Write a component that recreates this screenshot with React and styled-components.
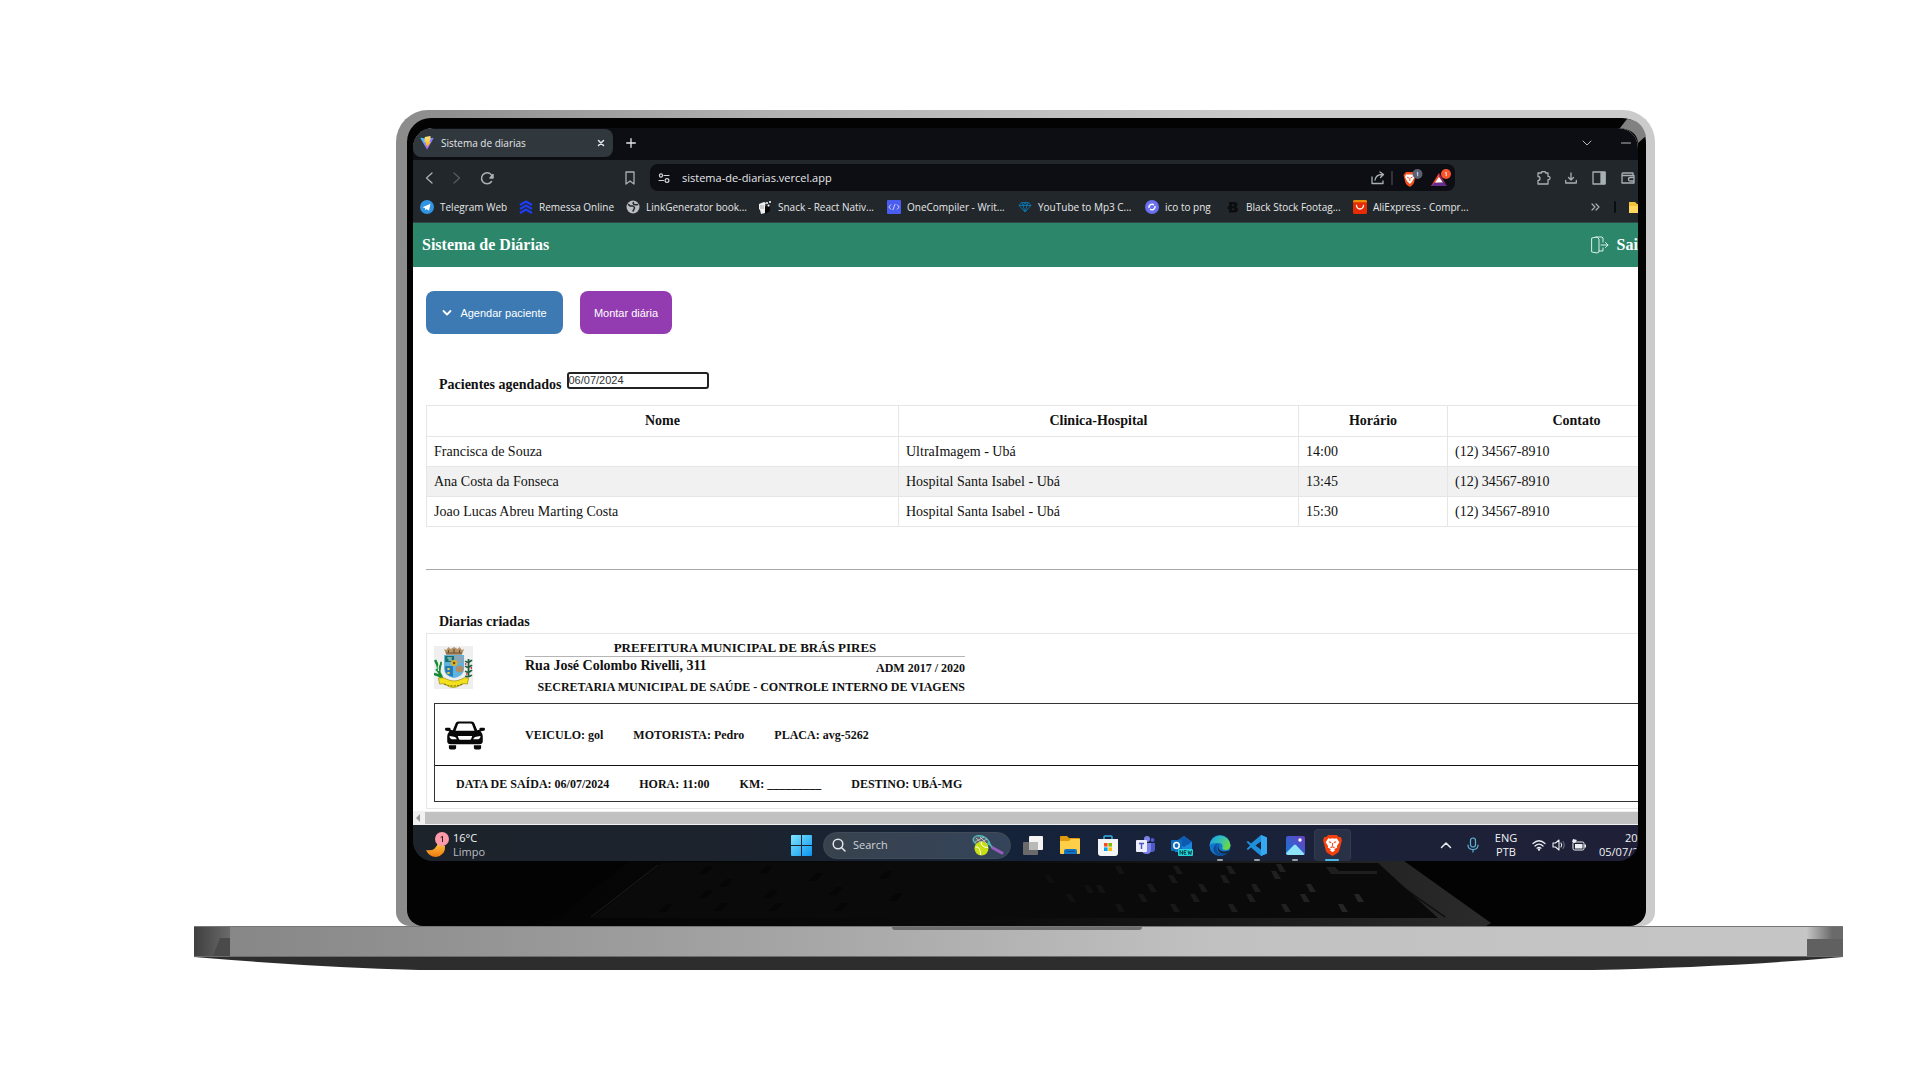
import React from "react";
import styled, { createGlobalStyle } from "styled-components";

const serif = '"Liberation Serif", "Times New Roman", serif';
const sans = '"Liberation Sans", Arial, sans-serif';
const ui = '"Open Sans", "Noto Sans", sans-serif';

const GlobalStyle = createGlobalStyle`
  *, *::before, *::after { box-sizing: border-box; }
  body { margin: 0; background: #fff; font-family: ${ui}; }
  button, input { font: inherit; color: inherit; }
  svg { display: block; flex: none; }
`;

/* ---------- laptop shell ---------- */

const Stage = styled.main`
  min-height: 100vh;
  padding: 110px 77px 0 194px;
  overflow: hidden;
`;
const Lid = styled.div`
  margin: 0 188px 0 202px;
  padding: 8px 9px 0 11px;
  background: linear-gradient(90deg, #8b8b8b, #b2b2b2 30%, #cbcbcb 70%, #cbcbcb);
  border-radius: 32px 32px 14px 14px;
`;
const Bezel = styled.div`
  position: relative;
  padding: 10px 8px 0 6px;
  background: #030303;
  border-radius: 24px 24px 16px 16px;
`;
const Gleam = styled.svg`
  position: absolute;
  top: 0;
  right: 0;
`;
const Screen = styled.div`
  overflow: hidden;
  border-radius: 20px;
  background: #0d0e13;
`;
const Chin = styled.svg`
  width: 100%;
  height: 65px;
`;
const Base = styled.div`
  display: flex;
  justify-content: space-between;
  height: 31px;
  border-top: 1px solid #777;
  border-bottom: 1px solid #6c6c6c;
  background: linear-gradient(90deg, #858585, #a4a4a4 35%, #c1c1c1 62%, #c6c6c6);
`;
const EndCap = styled.svg`
  width: 36px;
  height: 29px;
`;
const Notch = styled.div`
  width: 250px;
  height: 3px;
  margin-right: 4px;
  background: #6e6e6e;
  border-radius: 0 0 8px 8px;
`;
const Underside = styled.svg`
  width: 100%;
  height: 13px;
`;

/* ---------- browser ---------- */

const Window = styled.div`
  width: calc(100% + 80px);
  height: 697px;
  overflow: hidden;
  background: #fff;
`;
const TabStrip = styled.div`
  display: flex;
  align-items: center;
  height: 32px;
  padding: 0 73px 2px 0;
  background: #0d0e13;
  color: #e4e6e8;
`;
const Tab = styled.div`
  display: flex;
  align-items: center;
  gap: 7px;
  width: 200px;
  height: 28px;
  padding: 0 7px;
  background: #30383d;
  border-radius: 8px;
  font-size: 10px;
`;
const Grow = styled.span`
  flex: 1;
`;
const IconButton = styled.button`
  display: flex;
  align-items: center;
  justify-content: center;
  flex: none;
  width: ${(p) => p.$w || 28}px;
  height: ${(p) => p.$h || 26}px;
  padding: 0;
  border: 0;
  background: none;
`;
const Toolbar = styled.div`
  display: flex;
  align-items: center;
  height: 35px;
  padding: 0 76px 0 2px;
  background: #22272b;
`;
const ToolGap = styled.span`
  width: 118px;
`;
const Address = styled.div`
  display: flex;
  align-items: center;
  flex: 1;
  height: 27px;
  margin: 0 75px 0 12px;
  padding: 0 1px 0 8px;
  background: #0d0e13;
  border-radius: 8px;
`;
const AddressInput = styled.input`
  flex: 1;
  min-width: 0;
  margin-left: 12px;
  padding: 0;
  border: 0;
  outline: 0;
  background: none;
  color: #e6e8ea;
  font-size: 11px;
`;
const Bookmarks = styled.nav`
  display: flex;
  align-items: center;
  height: 28px;
  padding: 0 69px 3px 7px;
  background: #22272b;
  border-bottom: 1px solid #2f4a46;
`;
const Bookmark = styled.a`
  display: flex;
  align-items: center;
  gap: 6px;
  width: ${(p) => p.$w}px;
  flex: none;
  color: #e6e8ea;
  font-size: 10px;
  text-decoration: none;
  white-space: nowrap;
`;

/* ---------- page ---------- */

const Header = styled.header`
  display: flex;
  align-items: center;
  justify-content: space-between;
  height: 44px;
  padding: 0 73px 0 9px;
  background: #2b866a;
  color: #fff;
  font-family: ${serif};
`;
const Brand = styled.h1`
  margin: 0;
  font-size: 16px;
`;
const Exit = styled.a`
  display: flex;
  align-items: center;
  gap: 8px;
  color: #fff;
  font-size: 16px;
  font-weight: bold;
  text-decoration: none;
`;
const Content = styled.div`
  padding: 24px 12px 0 13px;
  font-family: ${serif};
  color: #111;
`;
const Actions = styled.div`
  display: flex;
  gap: 17px;
`;
const Action = styled.button`
  display: flex;
  align-items: center;
  justify-content: center;
  gap: 8px;
  width: ${(p) => p.$w}px;
  height: 43px;
  padding: 0;
  border: 0;
  border-radius: 8px;
  background: ${(p) => p.$color};
  color: #fff;
  font: 11px ${sans};
`;
const Filter = styled.div`
  display: flex;
  gap: 5px;
  height: 33px;
  margin-top: 38px;
  padding-left: 13px;
`;
const Label = styled.label`
  padding-top: 4px;
  font-size: 14px;
  line-height: 18px;
  font-weight: bold;
`;
const DateInput = styled.input`
  width: 142px;
  height: 17px;
  padding: 0 0 2px;
  border: 2px solid #222;
  border-radius: 3px;
  outline: 0;
  background: #fff;
  color: #333;
  font: 11px ${sans};
`;
const Table = styled.table`
  width: 100%;
  table-layout: fixed;
  border-collapse: collapse;
  font-size: 14px;
`;
const Col = styled.col`
  width: ${(p) => p.$w};
`;
const Row = styled.tr`
  height: ${(p) => (p.$head ? 31 : 30)}px;
  background: ${(p) => (p.$shade ? "#f1f1f1" : "#fff")};
`;
const Cell = styled.td`
  padding: 0 7px;
  border: 1px solid #e6e6e6;
`;
const Rule = styled.hr`
  margin: 42px 0 0;
  border: 0;
  border-top: 1px solid #a8a8a8;
`;
const SectionTitle = styled.h2`
  margin: 43px 0 0;
  padding-left: 13px;
  font-size: 14px;
  line-height: 18px;
`;
const Card = styled.article`
  margin-top: 2px;
  padding: 6px 7px;
  border: 1px solid #e6e6e6;
  font-size: 12px;
  font-weight: bold;
`;
const CardHead = styled.div`
  display: flex;
  gap: 52px;
  height: 63px;
  padding-top: 6px;
`;
const Issuer = styled.div`
  width: 440px;
  margin-top: -6px;
`;
const IssuerName = styled.div`
  border-bottom: 1px solid #b5b5b5;
  font-size: 13px;
  line-height: 16px;
  text-align: center;
`;
const StreetRow = styled.div`
  display: flex;
  justify-content: space-between;
  line-height: 22px;
`;
const Street = styled.span`
  font-size: 14px;
  line-height: 18px;
`;
const Office = styled.div`
  line-height: 16px;
  text-align: right;
  white-space: nowrap;
`;
const Trip = styled.div`
  border: 1px solid #333;
`;
const TripRow = styled.div`
  display: flex;
  align-items: center;
  gap: 30px;
  height: ${(p) => p.$h}px;
  padding: 2px 0 0 ${(p) => p.$pad}px;
  border-top: ${(p) => (p.$line ? "1px solid #111" : "0")};
`;
const CarBox = styled.span`
  width: 50px;
`;
const ScrollTrack = styled.div`
  display: flex;
  align-items: center;
  gap: 5px;
  height: 14px;
  margin-top: 2px;
  padding-left: 3px;
  background: #f1f1f1;
`;
const Thumb = styled.div`
  flex: 1;
  height: 12px;
  background: #c1c1c1;
`;

/* ---------- taskbar ---------- */

const Taskbar = styled.footer`
  display: flex;
  align-items: center;
  height: 36px;
  padding: 4px 0 0 13px;
  background: linear-gradient(90deg, #1d232b, #1c232d 25%, #15233a 50%, #1d2138 85%, #1f2038);
  color: #f2f3f5;
  font-size: 11px;
  line-height: 14px;
`;
const Weather = styled.div`
  display: flex;
  align-items: center;
  gap: 3px;
  width: 363px;
`;
const Muted = styled.div`
  color: #b9bdc3;
`;
const SearchBox = styled.label`
  display: flex;
  align-items: center;
  width: 188px;
  height: 27px;
  margin: 0 3px 0 10px;
  padding: 0 6px 0 8px;
  background: linear-gradient(90deg, #38424e, #34445a);
  border: 1px solid #424c59;
  border-radius: 14px;
`;
const SearchInput = styled.input`
  flex: 1;
  min-width: 0;
  margin-left: 7px;
  padding: 0;
  border: 0;
  outline: 0;
  background: none;
  font-size: 11px;
  &::placeholder { color: #cfd4da; opacity: 1; }
`;
const Apps = styled.div`
  display: grid;
  grid-template-columns: repeat(9, 1fr);
  width: 337px;
`;
const AppButton = styled.button`
  display: flex;
  flex-direction: column;
  align-items: center;
  justify-content: flex-end;
  gap: 3px;
  height: 32px;
  padding: 0;
  border: ${(p) => (p.$active ? "1px solid #323a50" : "0")};
  border-bottom: 0;
  border-radius: 4px;
  background: ${(p) => (p.$active ? "#283146" : "none")};
  &::after {
    content: "";
    width: ${(p) => (p.$active ? 14 : 6)}px;
    height: 2px;
    border-radius: 1px;
    background: ${(p) => (p.$active ? "#4cb8e8" : p.$open ? "#9a9fa8" : "transparent")};
  }
`;
const Tray = styled.div`
  display: flex;
  align-items: center;
  gap: 6px;
  flex: none;
  margin-left: auto;
  white-space: nowrap;
`;
const Lang = styled.div`
  width: 26px;
  margin: 0 7px 0 2px;
  text-align: center;
`;
const Clock = styled.div`
  width: 39px;
  margin-left: 7px;
  overflow: hidden;
`;
const ClockTime = styled.div`
  padding-left: 26px;
`;

/* ---------- drawings ---------- */

const Line = ({ w = 14, h = 14, box, color = "#a9b0b5", sw = 1.3, children }) => (
  <svg width={w} height={h} viewBox={box || `0 0 ${w} ${h}`} fill="none" stroke={color} strokeWidth={sw} strokeLinecap="round" strokeLinejoin="round">
    {children}
  </svg>
);

const Vite = () => (
  <svg width="14" height="14" viewBox="0 0 32 32">
    <defs>
      <linearGradient id="va" x1="0" y1="0" x2="1" y2="1"><stop stopColor="#41d1ff" /><stop offset="1" stopColor="#bd34fe" /></linearGradient>
      <linearGradient id="vb" x1="0" y1="0" x2="0" y2="1"><stop stopColor="#ffea83" /><stop offset="1" stopColor="#ffa800" /></linearGradient>
    </defs>
    <path d="M1 5l14.500 25.500q.8 1 1.500 0L31 5q0-1-1-1L16 6.500 2 4q-1 0-1 1z" fill="url(#va)" />
    <path d="M24 0L11 2l-1 13 4-1-1 7 3-1-1 7 10-14-4 1 3-8z" fill="url(#vb)" />
  </svg>
);
const Telegram = () => (
  <svg width="14" height="14" viewBox="0 0 14 14"><circle cx="7" cy="7" r="7" fill="#2f94e4" /><path d="M2.500 7.200l8-3.400-1.500 7-2.500-1.700-1.200 1.200-.3-2.200z" fill="#fff" /></svg>
);
const Remessa = () => (
  <svg width="14" height="14" viewBox="0 0 14 14" fill="none" stroke="#1d3df2" strokeWidth="2.200"><path d="M1 5l6-3.500L13 5M1 9l6-3.500L13 9M1 13l6-3.500 6 3.500" /></svg>
);
const Globe = () => (
  <svg width="14" height="14" viewBox="0 0 14 14"><circle cx="7" cy="7" r="6.500" fill="#b9bdc0" /><path d="M2.500 4.500q1.500 2 3.500 1.500t2.500 2Q8 9.500 7 11M7.500 2.500q-1 1.500 1 2t3 0" fill="none" stroke="#23282c" strokeWidth="1.500" strokeLinecap="round" /></svg>
);
const Snack = () => (
  <svg width="14" height="14" viewBox="0 0 14 14"><path d="M1 4l5-2 2 1-1 2 1 2-1 6-4 1-1-4-1-1z" fill="#eee" /><path d="M7 6l5 1v4l-5 3z" fill="#080808" /><circle cx="9" cy="3" r="1" fill="#fff" /><circle cx="12" cy="2" r="1" fill="#fff" /><circle cx="10.500" cy="5.500" r="1" fill="#fff" /><path d="M2 6h4M2 8h4" stroke="#777" strokeWidth=".6" /></svg>
);
const Compiler = () => (
  <svg width="14" height="14" viewBox="0 0 14 14"><rect width="14" height="14" rx="1" fill="#4a5df0" /><path d="M4 4.500L1.800 7 4 9.500M10 4.500L12.200 7 10 9.500M8.200 4L5.800 10" fill="none" stroke="#cfd5ff" /></svg>
);
const Diamond = () => (
  <svg width="14" height="14" viewBox="0 0 14 14" fill="none" stroke="#0c6fa8" strokeWidth="1"><path d="M3.500 2.500h7L13 5.500l-6 6.500-6-6.500zM1 5.500h12M3.500 2.500l1.500 3 2 6.500 2-6.500 1.500-3M5 5.500l2-3 2 3" /></svg>
);
const IcoPng = () => (
  <svg width="14" height="14" viewBox="0 0 14 14"><circle cx="7" cy="7" r="7" fill="#6a6ff0" /><path d="M4 8a3.200 3.200 0 0 1 5-3.200M10 6a3.200 3.200 0 0 1-5 3.200" fill="none" stroke="#fff" strokeWidth="1.500" /></svg>
);
const BlackB = () => (
  <svg width="14" height="14" viewBox="0 0 14 14"><path d="M3 2h5.500q3 0 3 2.600Q11.500 6.500 10 7q2 .5 2 2.500 0 3-3.500 3H3V9H1.500V6.500H3zM6 4.500v1.500h2V4.500zM6 8.500v1.600h2.300V8.500z" fill="#0c0d0f" fillRule="evenodd" /></svg>
);
const Ali = () => (
  <svg width="14" height="14" viewBox="0 0 14 14"><rect width="14" height="14" rx="1.500" fill="#e62b05" /><path d="M0 2.300V1.500Q0 0 1.500 0h11Q14 0 14 1.500v.8z" fill="#e8900c" /><path d="M3.500 5.500Q4 9 7 9t3.500-3.500" fill="none" stroke="#fff" strokeWidth="1.300" strokeLinecap="round" /></svg>
);
const Brave = ({ s = 16 }) => (
  <svg width={s} height={s} viewBox="0 0 20 20">
    <path d="M6 0h8l2 2 2-.2L19 5l-.8 3-2 7.500Q15.500 17 10 20 4.500 17 3.800 15.500L1.800 8 1 5l1-3.200L4 2z" fill="#f4400e" />
    <path d="M6 3l2 .5 2-.5 2 .5 2-.5 2.500 4-2.300 3.500.3 1.500-3 1.500 1 1-2.500 2-2.500-2 1-1-3-1.500.3-1.500L3.500 7z" fill="#fff" />
    <path d="M6.500 6.500l2.300.8M13.500 6.500l-2.300.8M10 7.500v3M8 12l2-.8 2 .8" stroke="#f4511e" strokeWidth="1.100" fill="none" />
  </svg>
);
const ShieldBadge = () => (
  <svg width="20" height="18" viewBox="0 0 20 18">
    <path d="M3 3h7l1.500 1.500 1.500 1.500-.6 2-1.500 6Q10 16 7 18 3 16 2.500 14L1 8l-.5-2z" fill="#f4511e" />
    <path d="M3 5.500h7l1.500 2.500L9.500 12l-2.500 3-3-3-2-4z" fill="#fff" />
    <path d="M4 8l2 1M9.500 8l-2 1M6.800 9v3" stroke="#f4511e" fill="none" />
    <circle cx="14.500" cy="5" r="5" fill="#5a6072" /><path d="M13.700 4l1-.8v4" stroke="#e8eaf0" fill="none" strokeWidth=".9" />
  </svg>
);
const BatBadge = () => (
  <svg width="20" height="18" viewBox="0 0 20 18">
    <path d="M8 4L0 17h8V8z" fill="#f0482a" /><path d="M0 17h16l-3.500-3.500h-9z" fill="#662d91" /><path d="M8 4l8 13-3.500-3.500L8 8.500z" fill="#a0256b" /><path d="M8 8L4 13.500h8z" fill="#fff" />
    <circle cx="15" cy="5" r="5" fill="#fb542b" /><path d="M14.200 4l1-.8v4" stroke="#fff" fill="none" strokeWidth=".9" />
  </svg>
);
const FolderMark = () => (
  <svg width="18" height="14" viewBox="0 0 18 14"><path d="M1 2h6l2 2h8v9H1z" fill="#f3c23c" /><path d="M1 6h16v7H1z" fill="#ffd75e" /></svg>
);
const Door = () => (
  <Line w={18} h={18} color="#dcefe8" sw={1}><path d="M1 2l5-1 2 2v13l-2 1-5-1zM5 1h6l1 1v4M8 15h4l0-3M10 9h7M14.500 6.500L17 9l-2.500 2.500" /></Line>
);
const Crest = () => (
  <svg width="39" height="43" viewBox="0 0 35 43" preserveAspectRatio="none">
    <rect width="35" height="43" fill="#efeff0" />
    <path d="M9 3l2 1 2-3 2 2 3-2 3 2 2-2 2 3 2-1-2 6H11z" fill="#b5946a" />
    <path d="M11 7h14M13 4v3M18 3v4M23 4v3" stroke="#6b4d2c" />
    <path d="M9 9h18v13q0 8-9 10-9-2-9-10z" fill="#5fb4df" />
    <path d="M10 10h8v6h-8z" fill="#15706b" /><path d="M12 12h4M13 14h3" stroke="#dceef4" />
    <path d="M18 10h8v7h-8z" fill="#8aa5b5" /><path d="M10 20h7v11q-7-2-7-7z" fill="#2478b8" />
    <circle cx="18" cy="17" r="3" fill="#d9b52c" /><circle cx="18" cy="17" r="1.200" fill="#7b4a1c" /><circle cx="23" cy="23" r="3.500" fill="#b08e6c" /><path d="M12 23h2M12 27h2" stroke="#f0d32c" strokeWidth="2" />
    <path d="M1 14q2 4 3 9M7 16q-3 5-2 12M2 23q3 3 5 8M0 28q5 1 8 5" stroke="#168a37" strokeWidth="2.300" fill="none" />
    <path d="M5 17q-2 4-1 8M8 14q-1 4 0 7" stroke="#f5f7e5" fill="none" />
    <path d="M31 13v18M28 15q3 3 6-1M28 20q3 3 6-1M28 25q3 3 6-1M28 30q3 2 6-1" stroke="#1f5b3d" strokeWidth="1.600" fill="none" />
    <path d="M28 18h1M33 22h1M29 28h1" stroke="#c22" strokeWidth="2" />
    <path d="M4 32q5-1 7 1 7 4 14 0 2-2 6-1l-1 6q-5-1-6 1-7 5-13 0-2-2-6-1z" fill="#f2e11c" stroke="#9d9210" strokeWidth=".7" />
    <path d="M9 38q8 4 17 0" stroke="#7c7412" strokeDasharray="2 1" fill="none" />
  </svg>
);
const Car = () => (
  <svg width="40" height="29" viewBox="0 0 36 30" preserveAspectRatio="none">
    <path d="M7 9.500L9.500 2.500Q10 .5 12 .5h12q2 0 2.500 2L29 9.500l2-.5V8q0-1 1-1h3q1 0 1 1.500 0 1.500-1 1.500l-3 .5q2 2.500 2 5.500v5q0 3-3 3H5Q2 24 2 21v-5Q2 13 4 10.500L1 10Q0 10 0 8.500 0 7 1 7h3q1 0 1 1v1zM9.500 10h17L24.300 3.300Q24 2.500 23 2.500H13q-1 0-1.300.8zM4 15.500q0 3 2 3.500h4.500q0-3-6.500-3.500zM32 15.500q0 3-2 3.500h-4.500q0-3 6.500-3.500zM11.500 15.500l1 3q.3.800 1 .8h9q.7 0 1-.8l1-3z" fill="#080808" fillRule="evenodd" />
    <path d="M3.500 25h6.500v3q0 1.500-1.500 1.500H5q-1.500 0-1.500-1.500zM26 25h6.500v3q0 1.500-1.500 1.500h-3.500q-1.500 0-1.500-1.500z" fill="#080808" />
  </svg>
);
const Moon = () => (
  <svg width="24" height="26" viewBox="0 0 24 26">
    <defs><linearGradient id="mn" x1="0" y1="0" x2="0" y2="1"><stop stopColor="#ffc23e" /><stop offset="1" stopColor="#ee7a10" /></linearGradient></defs>
    <path d="M0 18q9 2 12-7l7 3q1 9-9 11-7 0-10-7z" fill="url(#mn)" />
    <circle cx="16" cy="7" r="7" fill="#ff9aa8" /><path d="M14.700 5.500l1.800-1.200V10" stroke="#222" fill="none" />
  </svg>
);
const Start = () => (
  <svg width="21" height="21" viewBox="0 0 21 21">
    <defs><linearGradient id="st" gradientUnits="userSpaceOnUse" x1="0" y1="0" x2="21" y2="21"><stop stopColor="#7fe6ff" /><stop offset="1" stopColor="#0a93ef" /></linearGradient></defs>
    <path d="M0 1q0-1 1-1h9v10H0zM11 0h9q1 0 1 1v9H11zM0 11h10v10H1q-1 0-1-1zM11 11h10v9q0 1-1 1h-9z" fill="url(#st)" />
  </svg>
);
const Racket = () => (
  <svg width="32" height="21" viewBox="0 0 32 21">
    <ellipse cx="9" cy="6" rx="8" ry="5" transform="rotate(18 9 6)" fill="#59616b" stroke="#4fb5b5" strokeWidth="1.500" />
    <path d="M4 3l9 8M8 2l7 7M3 7l9-5M6 9l9-5" stroke="#ddd" strokeWidth=".7" />
    <path d="M15 9q4 0 5 4M17 6q1 5 5 7" stroke="#4fb5b5" strokeWidth="1.300" fill="none" /><path d="M21 13l9 5" stroke="#9a5cc0" strokeWidth="3" strokeLinecap="round" />
    <circle cx="9.500" cy="13.500" r="7" fill="#c8e012" /><path d="M3.500 12q5-1 5 8M9 6.500q0 6 7 6" stroke="#fff" fill="none" />
  </svg>
);
const TaskView = () => (
  <svg width="22" height="21" viewBox="0 0 22 21"><rect x="7" y="1" width="14" height="14" rx="1" fill="#f4f4f4" /><rect x="1" y="7" width="15" height="13" rx="1" fill="#6a6a6a" /><path d="M7 7h9v8H7z" fill="#b9b9b9" /></svg>
);
const Explorer = () => (
  <svg width="22" height="21" viewBox="0 0 22 21"><path d="M1 2q0-1 1-1h6l2 2h10q1 0 1 1v4H1z" fill="#e09a10" /><path d="M1 6h9l2-2h9v14q0 1-1 1H2q-1 0-1-1z" fill="#ffcf48" /><path d="M5 19v-3q0-2 2-2h9q2 0 2 2v3z" fill="#1373c4" /><path d="M7.500 16.500h8" stroke="#0b4d8d" /></svg>
);
const Store = () => (
  <svg width="22" height="21" viewBox="0 0 22 21"><path d="M7 5V2q0-1 1-1h6q1 0 1 1v3" fill="none" stroke="#35b0e6" strokeWidth="1.500" /><path d="M1 4h20v14q0 3-3 3H4q-3 0-3-3z" fill="#f3f4f5" /><path d="M7 8h3.600v3.600H7z" fill="#f25022" /><path d="M11.400 8H15v3.600h-3.600z" fill="#7fba00" /><path d="M7 12.400h3.600V16H7z" fill="#00a4ef" /><path d="M11.400 12.400H15V16h-3.600z" fill="#ffb900" /></svg>
);
const Teams = () => (
  <svg width="22" height="21" viewBox="0 0 22 21"><circle cx="13" cy="4" r="3" fill="#7b83eb" /><circle cx="18.500" cy="5" r="2" fill="#5059c9" /><path d="M15 8h6v6q0 3-3 3h-2z" fill="#5059c9" /><path d="M8 8h9v7q0 4-4.500 4T8 15z" fill="#7b83eb" /><rect x="2" y="5" width="11" height="12" rx="1" fill="#eceefe" /><path d="M5 8.500h5M7.500 8.500V14" stroke="#4b53bc" strokeWidth="1.400" /></svg>
);
const Outlook = () => (
  <svg width="22" height="21" viewBox="0 0 22 21"><path d="M4 7l9-6 8 6v10H4z" fill="#1c86dc" /><path d="M4 7l9-6 8 6-8 5z" fill="#0d5bb0" /><rect x="0" y="5" width="11" height="11" rx="1" fill="#0f6cbd" /><ellipse cx="5.500" cy="10.500" rx="2.700" ry="3" fill="none" stroke="#fff" strokeWidth="1.500" /><rect x="7" y="14" width="15" height="7" rx="1" fill="#24d6d6" /><path d="M9 19.500v-4l2.500 4v-4M15.500 15.700H13v3.600h2.500M13 17.500h2M17 15.500l.8 4 1-3 1 3 .8-4" stroke="#06394a" strokeWidth=".9" fill="none" /></svg>
);
const Edge = () => (
  <svg width="22" height="21" viewBox="0 0 22 21">
    <defs><linearGradient id="eg" x1="0" y1="0" x2="1" y2=".4"><stop stopColor="#1ba0e2" /><stop offset=".6" stopColor="#35c1b1" /><stop offset="1" stopColor="#66d84b" /></linearGradient></defs>
    <circle cx="11" cy="10.500" r="10.500" fill="#1277cf" /><path d="M.6 10A10.500 10.500 0 0 1 21.500 10q0 5-5 5-4 0-3-3 .5-4-4-4Q3 7.500.6 10z" fill="url(#eg)" /><path d="M9 8.500q-3 4 0 8 4 4 10 1-4 4-9 3.300Q4 19 4.500 13.500 5 9.500 9 8.500z" fill="#0c4f97" /><path d="M10 9q-2 4 1.500 6.500 3 2 8.500 0l-1.500 2.500q-6 2-9-2Q7.500 12 10 9z" fill="#15243b" />
  </svg>
);
const Code = () => (
  <svg width="22" height="21" viewBox="0 0 22 21"><path d="M15 0l6 2.500v16L15 21 5 12.500 2 15l-1.500-1 3.500-3.500L.5 7 2 6l3 2.500zM15.500 6l-6 4.500 6 4.500z" fill="#1f8fdc" fillRule="evenodd" /><path d="M15 0l6 2.500v16L15 21z" fill="#34a9f2" /></svg>
);
const Photos = () => (
  <svg width="22" height="21" viewBox="0 0 22 21"><defs><linearGradient id="ph" x1="0" y1="1" x2="1" y2="0"><stop stopColor="#1276d8" /><stop offset="1" stopColor="#6b3fc0" /></linearGradient></defs><rect x="2" y="1" width="19" height="19" rx="2" fill="url(#ph)" /><path d="M2 18l8-8q1-1 2 0l8.500 9q-.5 1-1.500 1H4q-2 0-2-2z" fill="#8ee3f8" /><circle cx="16" cy="5" r="1.700" fill="#fff" /></svg>
);
const CaretUp = () => <Line w={12} h={8} color="#e8eaee" sw={1.500}><path d="M1.500 6.500L6 2l4.500 4.500" /></Line>;

const bookmarks = [
  ["Telegram Web", Telegram, 99],
  ["Remessa Online", Remessa, 107],
  ["LinkGenerator book...", Globe, 132],
  ["Snack - React Nativ...", Snack, 129],
  ["OneCompiler - Writ...", Compiler, 131],
  ["YouTube to Mp3 C...", Diamond, 127],
  ["ico to png", IcoPng, 81],
  ["Black Stock Footag...", BlackB, 127],
  ["AliExpress - Compr...", Ali, 120],
];
const patients = [
  ["Francisca de Souza", "UltraImagem - Ubá", "14:00", "(12) 34567-8910"],
  ["Ana Costa da Fonseca", "Hospital Santa Isabel - Ubá", "13:45", "(12) 34567-8910"],
  ["Joao Lucas Abreu Marting Costa", "Hospital Santa Isabel - Ubá", "15:30", "(12) 34567-8910"],
];
const columns = [["Nome", "472px"], ["Clinica-Hospital", "400px"], ["Horário", "149px"], ["Contato", "auto"]];
const apps = [
  ["Task view", TaskView], ["Explorer", Explorer], ["Store", Store], ["Teams", Teams], ["Outlook", Outlook],
  ["Edge", Edge, true], ["Code", Code, true], ["Photos", Photos, true], ["Brave", () => <Brave s={21} />, true, true],
];
const keys = [
  [1045, 14], [1066, 33], [1084, 24], [1096, 24], [1115, 5], [1173, 5], [1168, 14], [1147, 23], [1138, 33], [1115, 43],
  [1170, 43], [1198, 23], [1190, 33], [1226, 5], [1220, 14], [1228, 43], [1251, 23], [1246, 33], [1281, 43],
  [1306, 23], [1300, 33], [1354, 33], [1338, 43], [1271, 10], [1276, 3],
];
const darkKeys = [[700, 5], [760, 5], [810, 12], [720, 18], [700, 29], [765, 29], [830, 26], [660, 43], [715, 42], [770, 42], [835, 42], [880, 10], [890, 32]];

function Reflection() {
  return (
    <Chin viewBox="413 0 1225 65" preserveAspectRatio="none" aria-hidden="true">
      <defs>
        <linearGradient id="deck" x1="0" x2="1"><stop stopColor="#040404" /><stop offset=".5" stopColor="#0b0b0b" /><stop offset="1" stopColor="#2b2b2b" /></linearGradient>
      </defs>
      <path d="M630 0H1404L1491 62 1486 65H530L560 55z" fill="url(#deck)" />
      <path d="M662 2H1378L1438 57H592z" fill="#0a0a0a" />
      <path d="M658 4L591 56" stroke="#1e1e1e" />
      <path d="M1374 6L1445 56" stroke="#0c0c0c" strokeWidth="1.500" />
      <path d="M1326 6h9l4 4h38v3h-46z" fill="#262626" opacity=".7" />
      {darkKeys.map(([x, y]) => (
        <path key={`${x}-${y}`} d={`M${x + 6} ${y}h7l-7 8h-8z`} fill="#060606" />
      ))}
      {keys.map(([x, y]) => (
        <path key={`${x}-${y}`} d={`M${x} ${y}h5l5 8h-6z`} fill="#2c2c2c" opacity={(x - 980) / 440} />
      ))}
    </Chin>
  );
}

function Browser() {
  return (
    <Window>
      <TabStrip>
        <Tab>
          <Vite />
          <span>Sistema de diarias</span>
          <Grow />
          <IconButton $w={10} aria-label="Close tab"><Line w={8} h={8} color="#e4e6e8" sw={1.500}><path d="M1.500 1.500l5 5M6.500 1.500l-5 5" /></Line></IconButton>
        </Tab>
        <IconButton $w={36} aria-label="New tab"><Line w={10} h={10} color="#e4e6e8"><path d="M5 .7v8.600M.7 5h8.600" /></Line></IconButton>
        <Grow />
        <IconButton aria-label="Search tabs" $w={40}><Line w={10} h={6} color="#b5b8bc" sw={1}><path d="M1 1l4 4 4-4" /></Line></IconButton>
        <IconButton aria-label="Minimize" $w={38}><Line w={10} h={4} color="#b5b8bc" sw={1}><path d="M.5 2h9" /></Line></IconButton>
      </TabStrip>
      <Toolbar>
        <IconButton aria-label="Back"><Line w={8} h={12}><path d="M7 1L1.500 6 7 11" /></Line></IconButton>
        <IconButton aria-label="Forward"><Line w={8} h={12} color="#565c61"><path d="M1 1l5.500 5L1 11" /></Line></IconButton>
        <IconButton $w={32} aria-label="Reload"><Line w={14} h={14} sw={1.500}><path d="M11.500 10.500A5.500 5.500 0 1 1 12.500 6.500" /><path d="M13 3.500v3.500h-3z" fill="#a9b0b5" /></Line></IconButton>
        <ToolGap />
        <IconButton $w={17} aria-label="Bookmark"><Line w={12} h={14}><path d="M2 1h8v12L6 10l-4 3z" /></Line></IconButton>
        <Address>
          <Line w={12} h={12} color="#d0d4d8" sw={1.200}><circle cx="3" cy="3.500" r="1.600" /><path d="M6 3.500h5M1 8.500h4.500" /><circle cx="9" cy="8.500" r="1.900" /></Line>
          <AddressInput aria-label="Address" defaultValue="sistema-de-diarias.vercel.app" />
          <IconButton $w={14} aria-label="Share"><Line w={14} h={14}><path d="M1 6v6.500h11V10M4 9q1-5.500 7-5.500M9 1l3.500 2.500L9.500 6.500" /></Line></IconButton>
          <IconButton $w={13} aria-label="Divider"><Line w={2} h={14} color="#555b60" sw={1}><path d="M1 0v14" /></Line></IconButton>
          <IconButton $w={29} aria-label="Shields"><ShieldBadge /></IconButton>
          <IconButton $w={27} aria-label="Rewards"><BatBadge /></IconButton>
        </Address>
        <IconButton aria-label="Extensions"><Line><path d="M1 2h3.500Q4 .5 6.500.5T8.500 2H11v3.500q2-.3 2 1.500t-2 1.700V13H1V9.500q2 0 2-2t-2-2z" /></Line></IconButton>
        <IconButton $w={26} aria-label="Downloads"><Line w={12} h={12}><path d="M6 1v7M3.500 5.500L6 8l2.500-2.500M.7 8.500V11h10.600V8.500" /></Line></IconButton>
        <IconButton $w={30} aria-label="Sidebar"><Line><path d="M1 1h12v12H1z" /><path d="M9 1.500h4v11H9z" fill="#a9b0b5" /></Line></IconButton>
        <IconButton aria-label="Wallet"><Line><path d="M12 4.500V2H2Q1 2 1 3v9h12V4.500H1M13 6.500H9.500Q7.500 6.500 7.500 8.300T9.500 10H13" /></Line></IconButton>
      </Toolbar>
      <Bookmarks>
        {bookmarks.map(([name, Icon, w]) => (
          <Bookmark href="#" key={name} $w={w}><Icon />{name}</Bookmark>
        ))}
        <Grow />
        <IconButton $w={20} $h={20} aria-label="More bookmarks"><Line w={9} h={8} sw={1.200}><path d="M1 1l3 3-3 3M5 1l3 3-3 3" /></Line></IconButton>
        <IconButton $w={20} $h={20} aria-label="Folder divider"><Line w={2} h={12} color="#0c0d0f" sw={2}><path d="M1 1v10" /></Line></IconButton>
        <IconButton $w={24} $h={20} aria-label="Folder"><FolderMark /></IconButton>
      </Bookmarks>

      <Header>
        <Brand>Sistema de Diárias</Brand>
        <Exit href="#"><Door />Sair</Exit>
      </Header>
      <Content>
        <Actions>
          <Action $color="#3d7ab3" $w={137}><Line w={10} h={8} color="#fff" sw={1.800}><path d="M1.500 2L5 5.500 8.500 2" /></Line>Agendar paciente</Action>
          <Action $color="#933cb1" $w={92}>Montar diária</Action>
        </Actions>
        <Filter>
          <Label htmlFor="day">Pacientes agendados</Label>
          <DateInput id="day" defaultValue="06/07/2024" />
        </Filter>
        <Table>
          <colgroup>{columns.map(([name, w]) => <Col key={name} $w={w} />)}</colgroup>
          <thead><Row $head>{columns.map(([name]) => <Cell as="th" key={name}>{name}</Cell>)}</Row></thead>
          <tbody>
            {patients.map((p, i) => (
              <Row key={p[0]} $shade={i % 2 === 1}>{p.map((v, j) => <Cell key={j}>{v}</Cell>)}</Row>
            ))}
          </tbody>
        </Table>
        <Rule />
        <SectionTitle>Diarias criadas</SectionTitle>
        <Card>
          <CardHead>
            <Crest />
            <Issuer>
              <IssuerName>PREFEITURA MUNICIPAL DE BRÁS PIRES</IssuerName>
              <StreetRow><Street>Rua José Colombo Rivelli, 311</Street><span>ADM 2017 / 2020</span></StreetRow>
              <Office>SECRETARIA MUNICIPAL DE SAÚDE - CONTROLE INTERNO DE VIAGENS</Office>
            </Issuer>
          </CardHead>
          <Trip>
            <TripRow $h={61} $pad={10}>
              <CarBox><Car /></CarBox>
              <span>VEICULO: gol</span><span>MOTORISTA: Pedro</span><span>PLACA: avg-5262</span>
            </TripRow>
            <TripRow $h={36} $pad={21} $line>
              <span>DATA DE SAÍDA: 06/07/2024</span><span>HORA: 11:00</span><span>KM: _________</span><span>DESTINO: UBÁ-MG</span>
            </TripRow>
          </Trip>
        </Card>
      </Content>
      <ScrollTrack>
        <svg width="4" height="8" viewBox="0 0 4 8"><path d="M4 0v8L0 4z" fill="#999" /></svg>
        <Thumb />
      </ScrollTrack>
    </Window>
  );
}

function Bar() {
  return (
    <Taskbar>
      <Weather><Moon /><div><div>16°C</div><Muted>Limpo</Muted></div></Weather>
      <IconButton $w={24} aria-label="Start"><Start /></IconButton>
      <SearchBox>
        <Line w={14} h={14} color="#e2e5e9" sw={1.500}><circle cx="6" cy="6" r="4.800" /><path d="M9.500 9.500L13 13" /></Line>
        <SearchInput aria-label="Search" placeholder="Search" />
        <Racket />
      </SearchBox>
      <Apps>
        {apps.map(([name, Icon, open, active]) => (
          <AppButton key={name} aria-label={name} $open={open} $active={active}><Icon /></AppButton>
        ))}
      </Apps>
      <Tray>
        <IconButton $w={18} aria-label="Hidden icons"><CaretUp /></IconButton>
        <IconButton $w={24} aria-label="Microphone"><Line w={12} h={16} color="#5fb4d6" sw={1.200}><rect x="3.500" y="1" width="5" height="9" rx="2.500" /><path d="M1 8q0 4.500 5 4.500T11 8M6 12.500V15" /></Line></IconButton>
        <Lang><div>ENG</div><div>PTB</div></Lang>
        <Line w={14} h={12} color="#eef0f3" sw={1.200}><path d="M1 4.500Q7-1 13 4.500M3 7q4-3.800 8 0M5 9.200q2-1.800 4 0" /><circle cx="7" cy="10.500" r=".6" /></Line>
        <Line w={14} h={12} color="#eef0f3" sw={1.100}><path d="M1 4h2.500L7 1v10L3.500 8H1zM9 4q1.500 2 0 4" /><path d="M11 2.500q2.500 3.500 0 7" stroke="#666c7c" /></Line>
        <svg width="14" height="12" viewBox="0 0 14 12"><rect x="1" y="3" width="11" height="8" rx="1.500" fill="none" stroke="#eef0f3" /><path d="M3 5h7.500v4.500H3zM12.500 5.500H14v3h-1.500zM1 0l4 1-2 3-3-1z" fill="#eef0f3" /></svg>
        <Clock><ClockTime>20</ClockTime><div>05/07/2024</div></Clock>
      </Tray>
    </Taskbar>
  );
}

export default function App() {
  return (
    <>
      <GlobalStyle />
      <Stage>
        <Lid>
          <Bezel>
            <Screen>
              <Browser />
              <Bar />
            </Screen>
            <Reflection />
            <Gleam width="28" height="28" viewBox="0 0 28 28">
              <path d="M9 1Q24 2 28 18L20 25Q19 12 2 10z" fill="#818181" />
            </Gleam>
          </Bezel>
        </Lid>
        <Base>
          <EndCap viewBox="0 0 36 29">
            <defs><linearGradient id="capl"><stop stopColor="#3f3f3f" /><stop offset="1" stopColor="#6a6a6a" /></linearGradient></defs>
            <path d="M0 0h36v29H0z" fill="url(#capl)" /><path d="M26 11h10v18H19z" fill="#4a4a4a" />
          </EndCap>
          <Notch />
          <EndCap viewBox="0 0 36 29">
            <defs><linearGradient id="capr"><stop stopColor="#c4c4c4" /><stop offset=".7" stopColor="#6a6a6a" /></linearGradient></defs>
            <path d="M0 0h36v29H0z" fill="url(#capr)" /><path d="M0 12h36v17H0z" fill="#606060" />
          </EndCap>
        </Base>
        <Underside viewBox="0 0 1650 13" preserveAspectRatio="none">
          <path d="M0 0H1650Q1540 10 1400 13H225Q120 10 0 0z" fill="#2d2d2d" />
        </Underside>
      </Stage>
    </>
  );
}
